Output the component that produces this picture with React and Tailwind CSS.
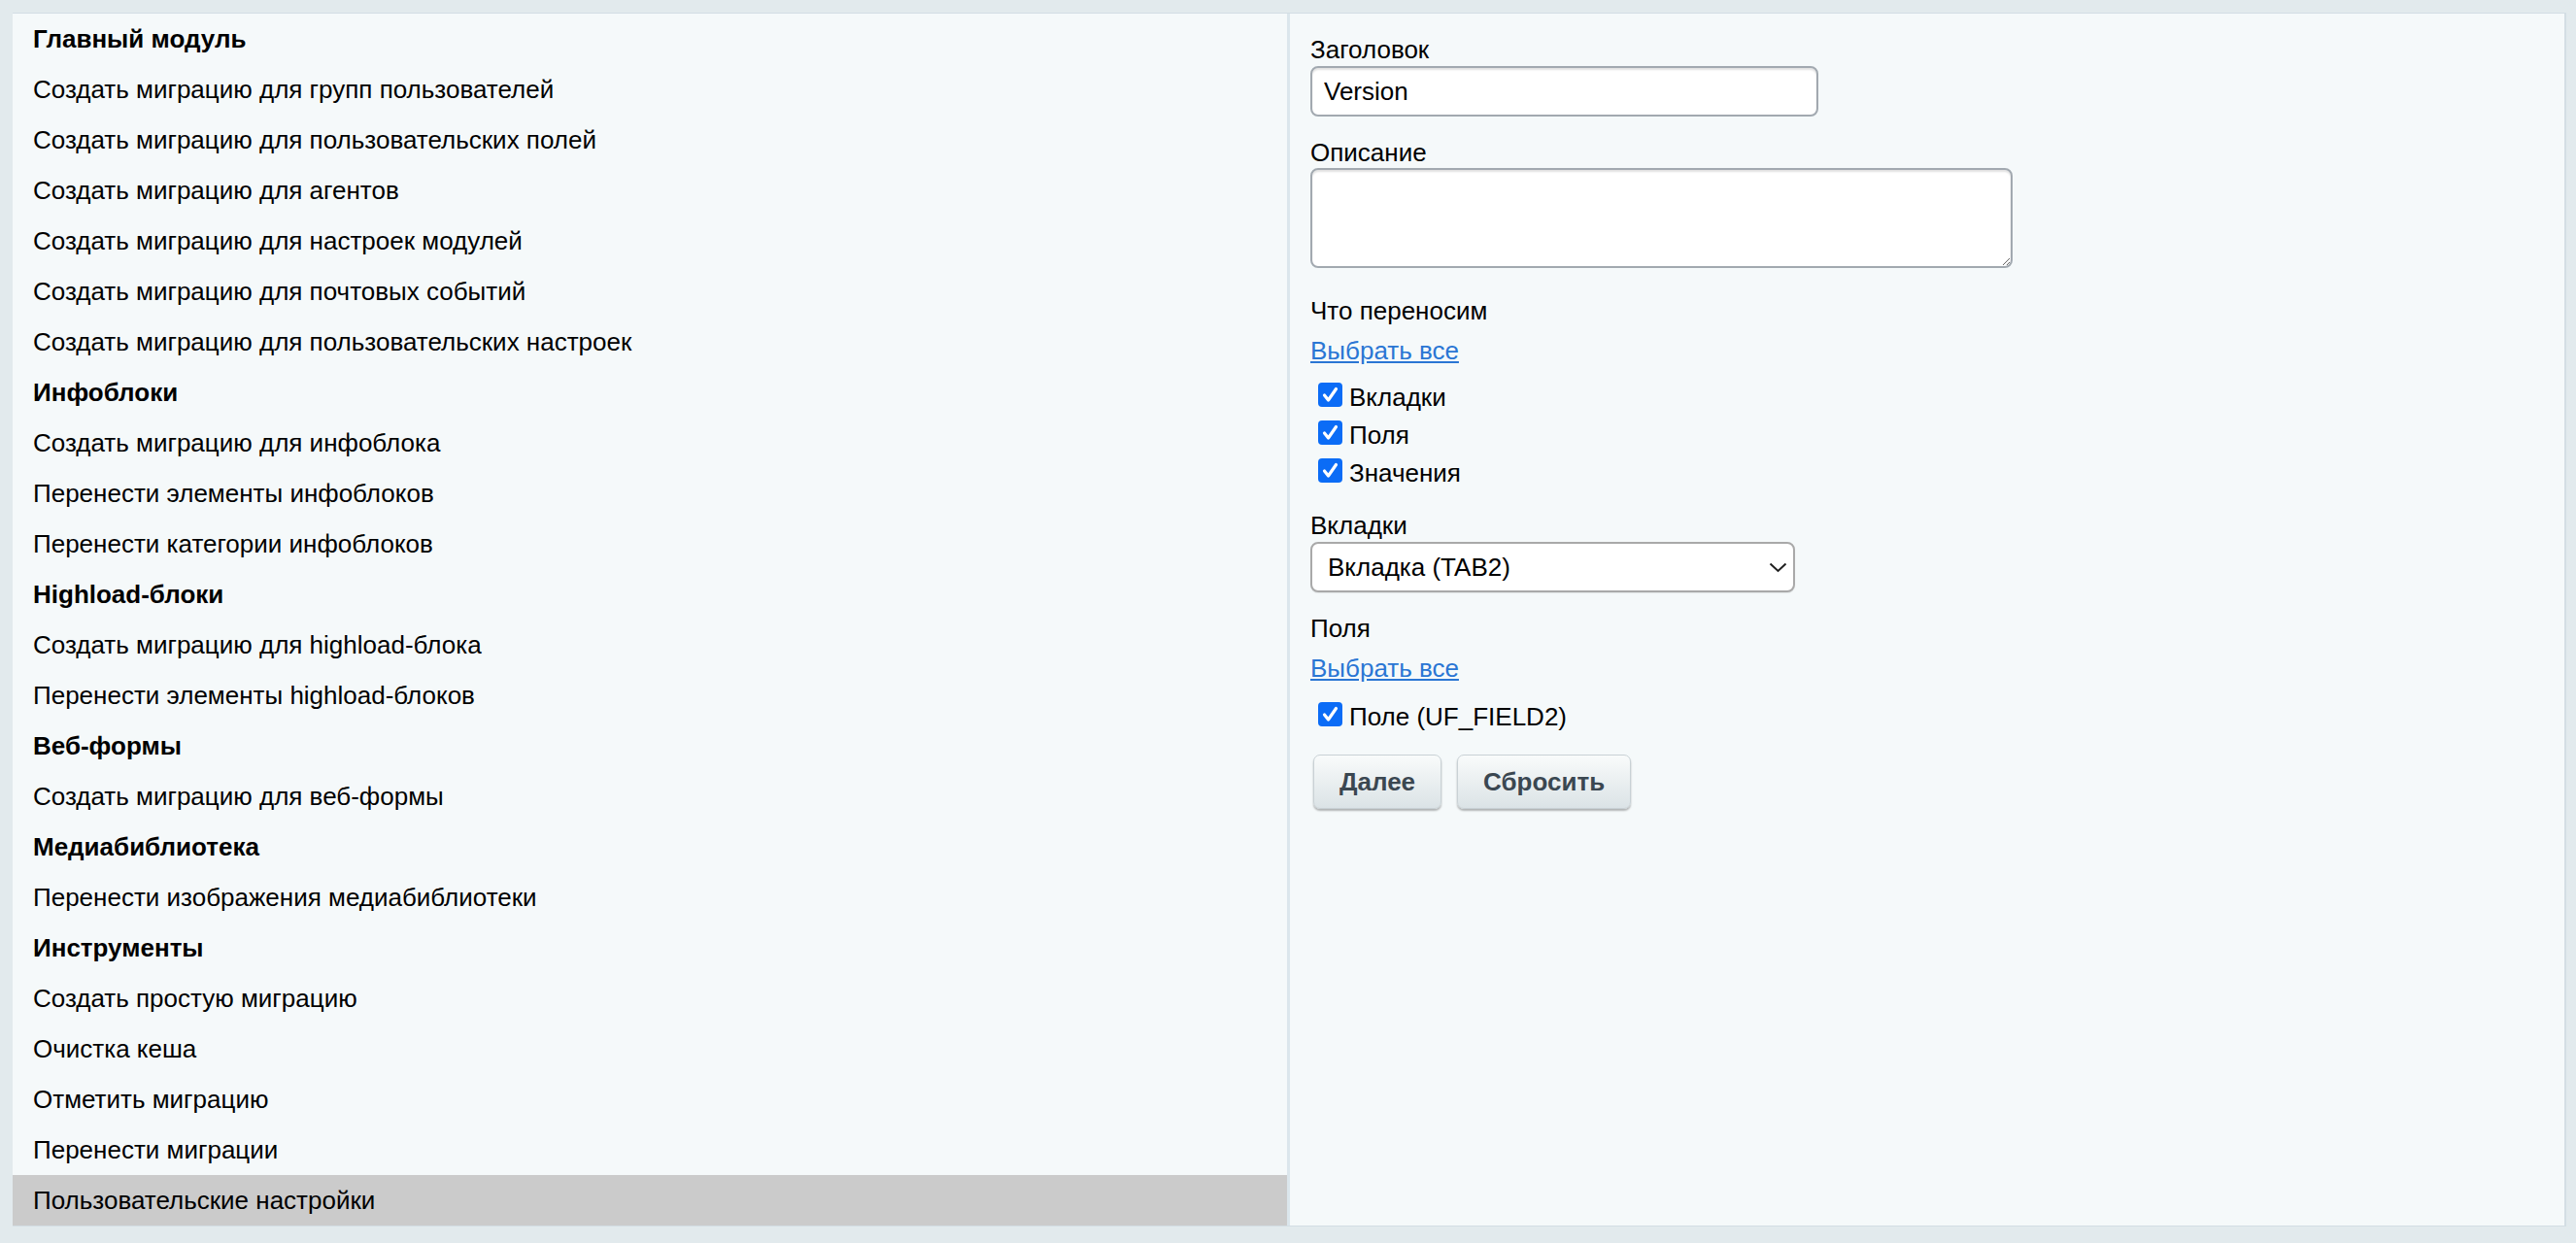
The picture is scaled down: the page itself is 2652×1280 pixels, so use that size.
import React from "react";

const items = [
  { t: "Главный модуль", h: true },
  { t: "Создать миграцию для групп пользователей" },
  { t: "Создать миграцию для пользовательских полей" },
  { t: "Создать миграцию для агентов" },
  { t: "Создать миграцию для настроек модулей" },
  { t: "Создать миграцию для почтовых событий" },
  { t: "Создать миграцию для пользовательских настроек" },
  { t: "Инфоблоки", h: true },
  { t: "Создать миграцию для инфоблока" },
  { t: "Перенести элементы инфоблоков" },
  { t: "Перенести категории инфоблоков" },
  { t: "Highload-блоки", h: true },
  { t: "Создать миграцию для highload-блока" },
  { t: "Перенести элементы highload-блоков" },
  { t: "Веб-формы", h: true },
  { t: "Создать миграцию для веб-формы" },
  { t: "Медиабиблиотека", h: true },
  { t: "Перенести изображения медиабиблиотеки" },
  { t: "Инструменты", h: true },
  { t: "Создать простую миграцию" },
  { t: "Очистка кеша" },
  { t: "Отметить миграцию" },
  { t: "Перенести миграции" },
  { t: "Пользовательские настройки", sel: true },
];

function Check({ label }) {
  return (
    <label className="flex h-[39px] items-start leading-[39px]">
      <span className="relative ml-[8px] mt-[4px] h-[25px] w-[25px] shrink-0">
        <input
          type="checkbox"
          defaultChecked
          className="block h-[25px] w-[25px] appearance-none rounded-[4px] bg-[#0b6cf6] m-0"
        />
        <svg
          className="pointer-events-none absolute left-0 top-0"
          width="25"
          height="25"
          viewBox="0 0 25 25"
        >
          <path
            d="M6.5 13 L10.5 18 L18.5 6.5"
            fill="none"
            stroke="#fff"
            strokeWidth="3.2"
            strokeLinecap="round"
            strokeLinejoin="round"
          />
        </svg>
      </span>
      <span className="ml-[7px]">{label}</span>
    </label>
  );
}

function Btn({ children }) {
  return (
    <button className="h-[56px] rounded-[7px] border border-[#c9d1d5] bg-[linear-gradient(to_bottom,#f9fbfb,#dbe3e6)] px-[26px] text-[26px] font-bold text-[#3b4751] shadow-[0_2px_2px_rgba(0,0,0,0.28)]">
      {children}
    </button>
  );
}

export default function App() {
  return (
    <div className="h-[1280px] w-[2652px] overflow-hidden bg-[#e2eaed] pl-[13px] pt-[13px] font-['Liberation_Sans','Arial',sans-serif] text-[26px] text-black">
      <div className="flex h-[1250px] w-[2629px] border-t border-r-2 border-b border-[#d3dee4]">
        <div className="w-[1312px] bg-[#f5f9fa]">
          {items.map((it, i) => (
            <div
              key={i}
              className={
                "h-[52px] pl-[21px] leading-[52px] " +
                (it.h ? "font-bold " : "") +
                (it.sel ? "bg-[#cbcbcb]" : "")
              }
            >
              {it.t}
            </div>
          ))}
        </div>
        <div className="w-[3px] bg-[#dbe6ec]" />
        <div className="flex-1 bg-[#f5f9fa] pl-[21px] pt-[22px] leading-[30px]">
          <div className="h-[30px]">Заголовок</div>
          <input
            type="text"
            defaultValue="Version"
            className="mt-[2px] block h-[52px] w-[523px] rounded-[8px] border-2 border-[#a2a9b0] bg-white px-[12px] text-[26px] shadow-[inset_0_2px_2px_rgba(0,0,0,0.12)] outline-none"
          />
          <div className="mt-[22px] h-[30px]">Описание</div>
          <textarea className="mt-[1px] block h-[103px] w-[723px] rounded-[8px] border-2 border-[#a2a9b0] bg-white px-[12px] text-[26px] shadow-[inset_0_2px_2px_rgba(0,0,0,0.12)] outline-none" />
          <div className="mt-[29px] h-[30px]">Что переносим</div>
          <div className="mt-[11px] h-[30px]">
            <a href="#" className="text-[#2a76d4] underline">
              Выбрать все
            </a>
          </div>
          <div className="mt-[14px]">
            <Check label="Вкладки" />
            <Check label="Поля" />
            <Check label="Значения" />
          </div>
          <div className="mt-[19px] h-[30px]">Вкладки</div>
          <div className="relative mt-[2px] h-[52px] w-[499px]">
            <select className="block h-[52px] w-[499px] appearance-none rounded-[8px] border-2 border-[#a9a9a9] bg-white pl-[16px] text-[26px] shadow-[0_1px_1px_rgba(0,0,0,0.08)] outline-none">
              <option>Вкладка (TAB2)</option>
            </select>
            <svg
              className="pointer-events-none absolute right-[8px] top-[21px]"
              width="19"
              height="11"
              viewBox="0 0 19 11"
            >
              <path d="M1.5 1.5 L9.5 9 L17.5 1.5" fill="none" stroke="#1f1f1f" strokeWidth="2" />
            </svg>
          </div>
          <div className="mt-[22px] h-[30px]">Поля</div>
          <div className="mt-[11px] h-[30px]">
            <a href="#" className="text-[#2a76d4] underline">
              Выбрать все
            </a>
          </div>
          <div className="mt-[16px]">
            <Check label="Поле (UF_FIELD2)" />
          </div>
          <div className="ml-[3px] mt-[19px] flex gap-[16px]">
            <Btn>Далее</Btn>
            <Btn>Сбросить</Btn>
          </div>
        </div>
      </div>
    </div>
  );
}
